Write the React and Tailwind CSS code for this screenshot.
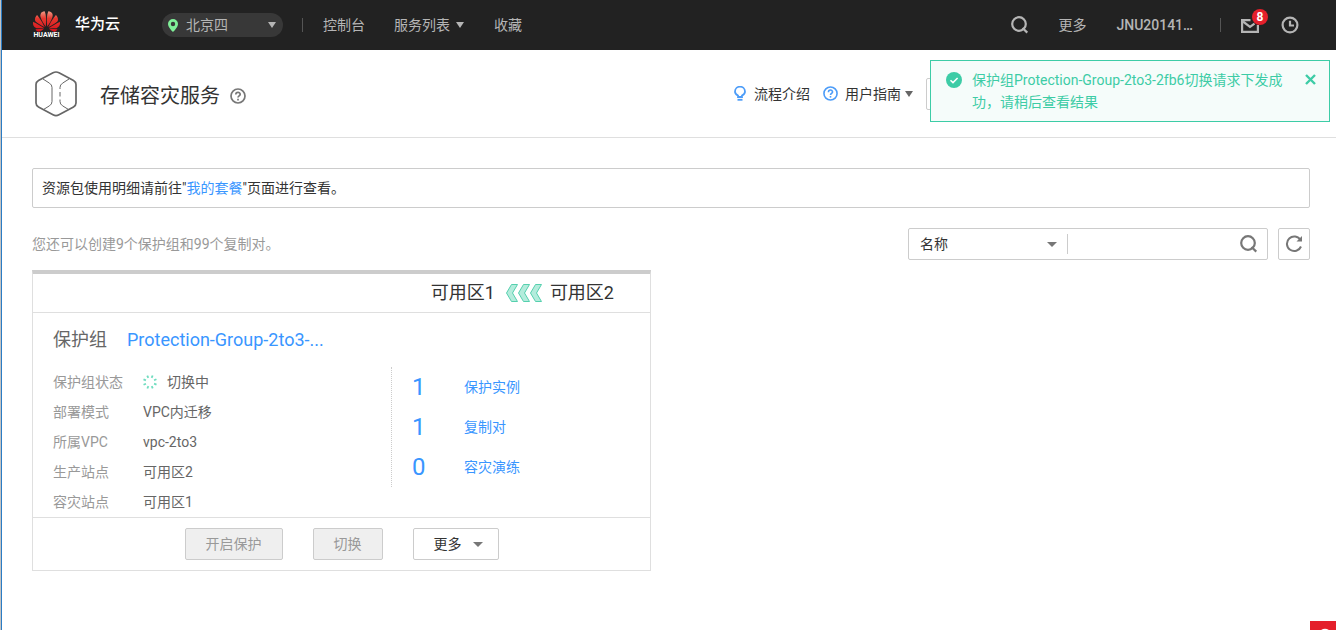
import { useState } from 'react';
import { SiHuawei } from 'react-icons/si';

const statusRows = [
  { label: '保护组状态', value: '切换中', loading: true },
  { label: '部署模式', value: 'VPC内迁移' },
  { label: '所属VPC', value: 'vpc-2to3' },
  { label: '生产站点', value: '可用区2' },
  { label: '容灾站点', value: '可用区1' },
];

const resources = [
  { count: 1, label: '保护实例' },
  { count: 1, label: '复制对' },
  { count: 0, label: '容灾演练' },
];

const Caret = ({ className }) => (
  <svg className={className} viewBox="0 0 10 6" preserveAspectRatio="none" fill="currentColor" aria-hidden="true">
    <path d="M0 0h10L5 6z" />
  </svg>
);

const SearchIcon = () => (
  <svg className="w-[18px] h-[18px]" viewBox="0 0 18 18" fill="none" stroke="currentColor" strokeWidth="2.2" aria-hidden="true">
    <circle cx="8" cy="8" r="6.8" />
    <path d="M11.5 12l4.8 4.6" />
  </svg>
);

const QuestionIcon = ({ className }) => (
  <svg className={className} viewBox="0 0 16 16" fill="none" stroke="currentColor" strokeWidth="1.7" aria-hidden="true">
    <circle cx="8" cy="8" r="7" />
    <path d="M5.8 6.6c0-3 4.4-2.9 4.4-.3C10.2 7.8 8 7.9 8 9.6" />
    <path d="M8 10.7v1.7" />
  </svg>
);

const Spinner = () => (
  <svg className="w-[14px] h-[14px] text-[#6fdcbf]" viewBox="0 0 14 14" fill="none" stroke="currentColor" strokeWidth="1.8" aria-hidden="true">
    {[22, 67, 112, 157, 202, 247, 292, 337].map((angle) => (
      <path key={angle} d="M7 0v2.6" transform={`rotate(${angle} 7 7)`} />
    ))}
  </svg>
);

const TopBar = () => (
  <header className="h-[50px] bg-[#222] text-[#b5b5b5] flex items-center justify-between pl-[31px] pr-[37px]">
    <div className="flex items-center">
      <a href="#" className="flex items-center gap-[15px] text-white">
        <span className="flex flex-col items-center w-[27px]">
          <svg className="w-0 h-0 absolute" aria-hidden="true">
            <defs>
              <linearGradient id="petal" x1="0" y1="0" x2="0" y2="1">
                <stop offset="0" stopColor="#f39a85" />
                <stop offset="0.35" stopColor="#e5382f" />
                <stop offset="1" stopColor="#d6121c" />
              </linearGradient>
            </defs>
          </svg>
          <SiHuawei className="w-[27px] h-[27px] -my-[3px]" fill="url(#petal)" stroke="none" aria-hidden="true" />
          <span className="text-[7px] leading-[7px] font-bold">HUAWEI</span>
        </span>
        <span className="text-[15px] font-medium">华为云</span>
      </a>
      <button className="ml-[42px] w-[121px] h-6 rounded-full bg-[#383838] flex items-center pl-[6px] pr-[7px]">
        <svg className="w-[10px] h-[13px]" viewBox="0 0 10 13" aria-hidden="true">
          <path fill="#7fef98" fillRule="evenodd" d="M5 0a5 5 0 0 0-5 5c0 3.5 5 8 5 8s5-4.5 5-8a5 5 0 0 0-5-5zm0 2.800a2.200 2.200 0 1 1 0 4.400 2.200 2.200 0 0 1 0-4.400z" />
        </svg>
        <span className="ml-2">北京四</span>
        <Caret className="w-2 h-[6px] ml-auto" />
      </button>
      <nav className="flex items-center ml-[19px]">
        <span className="w-px h-[14px] bg-[#555] mr-5" />
        <a href="#">控制台</a>
        <a href="#" className="ml-[29px] flex items-center gap-[6px]">
          服务列表
          <Caret className="w-2 h-[6px]" />
        </a>
        <a href="#" className="ml-[30px]">收藏</a>
      </nav>
    </div>

    <div className="flex items-center">
      <button aria-label="搜索">
        <SearchIcon />
      </button>
      <a href="#" className="ml-[29px]">更多</a>
      <a href="#" className="ml-[30px] font-medium">JNU20141…</a>
      <span className="w-px h-[14px] bg-[#555] ml-[27px] mr-5" />
      <button className="relative" aria-label="消息">
        <svg className="w-[18px] h-[15px]" viewBox="0 0 18 15" fill="none" stroke="currentColor" strokeWidth="2.2" aria-hidden="true">
          <path d="M9.500 2.100H1.100v11.800h15.800V7" />
          <path d="M2 3.500l7 5.300 4.500-3.200" />
        </svg>
        <span className="absolute -top-[9px] left-[11px] w-4 h-4 rounded-full bg-[#e41f2b] text-white text-xs leading-4 font-bold text-center">8</span>
      </button>
      <button className="ml-[22px]" aria-label="历史">
        <svg className="w-[18px] h-[18px]" viewBox="0 0 18 18" fill="none" stroke="currentColor" strokeWidth="2.2" aria-hidden="true">
          <circle cx="9" cy="9" r="7.4" />
          <path d="M9 4.800V9.500h4" />
        </svg>
      </button>
    </div>
  </header>
);

const ServiceTitle = () => (
  <div className="h-[88px] border-b border-[#dfdfdf] flex items-center justify-between pl-[33px] pr-[26px]">
    <div className="flex items-center">
      <svg className="w-[42px] h-[46px]" viewBox="0 0 42 46" fill="none" stroke="#666" aria-hidden="true">
        <path strokeWidth="1.7" d="M18 1.800q3-1.600 6 0l14.500 7.700q2.500 1.400 2.500 4v18.500q0 2.600-2.500 4L24 43.800q-3 1.600-6 0L3.500 36Q1 34.600 1 32V13.500q0-2.600 2.500-4z" />
        <path d="M8 8l6.500 4.200q2.500 1.600 2.500 4.300v14q0 2.700-2.500 4.300L8.500 38.500" />
        <path d="M34 8l-6.500 4.200q-2.500 1.600-2.500 4.300v1.500m0 3v4.500m0 3v2q0 2.700 2.500 4.300l6 3.700" />
      </svg>
      <div className="ml-[23px] pt-[5px] flex items-center">
        <h1 className="text-[20px] text-[#333]">存储容灾服务</h1>
        <QuestionIcon className="ml-[10px] w-4 h-4 text-[#777]" />
      </div>
    </div>
    <div className="flex items-center">
      <a href="#" className="flex items-center gap-2">
        <svg className="w-3 h-[15px]" viewBox="0 0 12 15" fill="none" stroke="#4c9cf8" strokeWidth="1.8" aria-hidden="true">
          <path d="M4 11V9.500C2 8.500 1 7.200 1 5.700a5 5 0 0 1 10 0c0 1.500-1 2.800-3 3.800V11z" />
          <path d="M3.500 13.800h5" />
        </svg>
        流程介绍
      </a>
      <a href="#" className="flex items-center ml-[13px]">
        <QuestionIcon className="w-[15px] h-[15px] text-[#4c9cf8]" />
        <span className="ml-[7px]">用户指南</span>
        <Caret className="ml-1 w-2 h-[6px] text-[#666]" />
      </a>
      <button className="ml-[13px] w-96 h-8 border border-[#ccc] rounded-xs" />
    </div>
  </div>
);

const Toast = ({ onClose }) => (
  <div role="status" className="fixed top-[60px] right-[6px] w-[400px] flex items-start border border-[#3dcca6] bg-[#f5fcfa] text-[#3dcca6] pl-[15px] pr-[13px] py-2 leading-[22px]">
    <svg className="w-4 h-4 mt-[3px] shrink-0" viewBox="0 0 16 16" aria-hidden="true">
      <circle cx="8" cy="8" r="8" fill="#3dcca6" />
      <path d="M4.500 8.200l2.500 2.400 4.600-4.600" fill="none" stroke="#fff" strokeWidth="1.5" />
    </svg>
    <p className="ml-[10px] w-[316px] break-all">保护组Protection-Group-2to3-2fb6切换请求下发成功，请稍后查看结果</p>
    <button onClick={onClose} className="ml-auto mt-[5px]" aria-label="关闭">
      <svg className="w-[11px] h-[11px]" viewBox="0 0 11 11" stroke="currentColor" strokeWidth="2.4" aria-hidden="true">
        <path d="M1 1l9 9M10 1l-9 9" />
      </svg>
    </button>
  </div>
);

const ProtectionGroupCard = () => (
  <section className="mt-[10px] w-[619px] max-w-full border border-t-4 border-[#dfdfdf] border-t-[#ccc]">
    <div className="h-[39px] border-b border-[#dfdfdf] flex items-center justify-end pr-9 text-[18px] text-[#333]">
      可用区1
      <svg className="ml-[11px] mr-2 w-9 h-[18px]" viewBox="0 0 36 18" fill="#b4ecdc" stroke="#55d0ae" aria-hidden="true">
        {[0, 12, 24].map((x) => (
          <path key={x} transform={`translate(${x} 0)`} d="M5.500.5h6L6.500 9l5 8.500h-6L.5 9z" />
        ))}
      </svg>
      可用区2
    </div>

    <div className="px-5">
      <div className="h-[54px] flex items-center gap-5 text-[18px]">
        <h2 className="text-[#666]">保护组</h2>
        <a href="#" className="text-[#3996ff]">Protection-Group-2to3-...</a>
      </div>
      <div className="flex items-start">
        <dl className="w-[338px] text-[#666]">
          {statusRows.map((row) => (
            <div key={row.label} className="h-[30px] flex items-center">
              <dt className="w-[90px] text-[#999]">{row.label}</dt>
              <dd className="flex items-center gap-[10px]">
                {row.loading && <Spinner />}
                {row.value}
              </dd>
            </div>
          ))}
        </dl>
        <ul className="border-l border-dotted border-[#ccc] pl-5 text-[#3996ff]">
          {resources.map((item) => (
            <li key={item.label}>
              <a href="#" className="h-10 flex items-center">
                <span className="w-[52px] text-[24px]">{item.count}</span>
                {item.label}
              </a>
            </li>
          ))}
        </ul>
      </div>
    </div>

    <div className="border-t border-[#dfdfdf] py-[10px] flex justify-center gap-[30px]">
      <button disabled className="h-8 px-5 border border-[#ccc] rounded-xs bg-[#efefef] text-[#999]">开启保护</button>
      <button disabled className="h-8 px-5 border border-[#ccc] rounded-xs bg-[#efefef] text-[#999]">切换</button>
      <button className="h-8 pl-5 pr-[15px] border border-[#ccc] rounded-xs flex items-center gap-[11px]">
        更多
        <Caret className="w-[10px] h-[5px] text-[#777]" />
      </button>
    </div>
  </section>
);

const App = () => {
  const [showToast, setShowToast] = useState(true);
  const [keyword, setKeyword] = useState('');

  return (
    <div className="flex min-h-screen bg-white text-sm text-[#333] font-[Roboto,'Noto_Sans_CJK_SC',sans-serif]">
      <div className="w-[2px] shrink-0 bg-[#c4c4c4] border-r border-[#2b7cc4]" />
      <div className="flex-1 min-w-0">
        <TopBar />
        <ServiceTitle />

        <main className="pt-[30px] pl-[30px] pr-[26px]">
          <div className="h-10 flex items-center px-[9px] border border-[#ccc] rounded-xs">
            <p>
              资源包使用明细请前往"<a href="#" className="text-[#3996ff]">我的套餐</a>"页面进行查看。
            </p>
          </div>

          <div className="mt-5 flex items-center justify-between">
            <p className="text-[#999]">您还可以创建9个保护组和99个复制对。</p>
            <div className="flex gap-[10px] text-[#777]">
              <div className="w-[360px] h-8 flex items-center border border-[#ccc] rounded-xs pr-[9px]">
                <div className="relative w-[158px] flex items-center">
                  <select aria-label="搜索条件" className="w-full appearance-none bg-transparent pl-[11px] text-[#333] outline-none">
                    <option>名称</option>
                  </select>
                  <Caret className="absolute right-[10px] w-[10px] h-[5px] pointer-events-none" />
                </div>
                <input
                  type="text"
                  aria-label="关键字"
                  value={keyword}
                  onChange={(e) => setKeyword(e.target.value)}
                  className="flex-1 min-w-0 h-5 border-l border-[#ccc] px-2 text-[#333] outline-none"
                />
                <button aria-label="搜索">
                  <SearchIcon />
                </button>
              </div>
              <button className="w-8 h-8 flex items-center justify-center border border-[#ccc] rounded-xs" aria-label="刷新">
                <svg className="w-[18px] h-[18px]" viewBox="0 0 18 18" fill="none" stroke="currentColor" strokeWidth="2" aria-hidden="true">
                  <path d="M15.500 5A7.300 7.300 0 1 0 16 11.500" />
                  <path d="M17 1v5.500h-5.500z" fill="currentColor" stroke="none" />
                </svg>
              </button>
            </div>
          </div>

          <ProtectionGroupCard />
        </main>
      </div>

      {showToast && <Toast onClose={() => setShowToast(false)} />}

      {/* Support widget, mostly below the fold */}
      <button className="fixed right-0 bottom-0 w-[26px] h-[9px] overflow-hidden bg-[#e41f2b]" aria-label="客服">
        <svg className="w-[26px] h-[9px]" viewBox="0 0 26 9" fill="none" stroke="#fff" strokeWidth="1.5" aria-hidden="true">
          <path d="M11 10q4-3 8 0" />
        </svg>
      </button>
    </div>
  );
};

export default App;
